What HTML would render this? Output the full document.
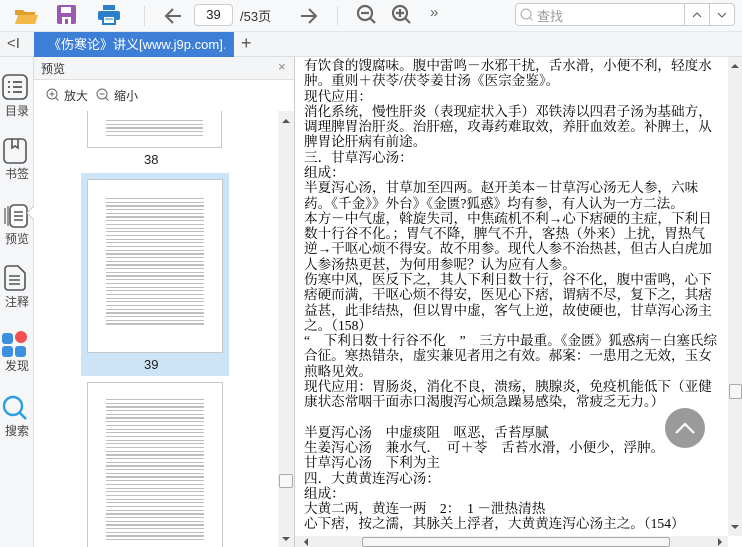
<!DOCTYPE html>
<html><head><meta charset="utf-8"><style>
*{margin:0;padding:0;box-sizing:border-box}
body{width:742px;height:547px;overflow:hidden;background:#fff;font-family:"Liberation Sans","Noto Sans CJK SC",sans-serif;position:relative}
.abs{position:absolute}
#tb{left:0;top:0;width:742px;height:32px;background:#f6f8fa;border-bottom:1px solid #e4e7ea}
#tabs{left:0;top:32px;width:742px;height:25px;background:#f3f5f7;border-bottom:1px solid #dcdfe3}
#tab{left:34px;top:32px;width:200px;height:25px;background:#3d7fd6;color:#fff;font-size:13px;line-height:25px;padding-left:14px}
#side{left:0;top:57px;width:34px;height:490px;background:#f5f6f8;border-right:1px solid #dcdfe3}
.si{position:absolute;left:0;width:34px;text-align:center;font-size:12px;color:#444}
#prev{left:34px;top:57px;width:261px;height:490px;background:#fff;border-right:1px solid #ccc;overflow:hidden}
#main{left:296px;top:57px;width:432px;height:479px;background:#fff;overflow:hidden}
.txt{position:absolute;left:8px;top:1px;font-family:"Liberation Serif","Noto Serif CJK SC",serif;font-size:13.6px;line-height:15.28px;color:#000;white-space:pre}
.pg{position:absolute;background:#fff;border:1px solid #c8c8c8;overflow:hidden}
.lines{position:absolute;left:18px;right:18px}
.lines div{height:1.2px;background:#888;margin-bottom:2.5px;opacity:.55}
</style></head><body>
<div id="tb" class="abs">
 <svg class="abs" style="left:14px;top:6px" width="24" height="20"><path d="M1 4h8l2 2h10v3H1z" fill="#e0a030"/><path d="M1 18L4 9h20l-3 9z" fill="#f2b84a"/></svg>
 <svg class="abs" style="left:57px;top:5px" width="20" height="20"><rect x="0" y="0" width="19" height="19" rx="2" fill="#9b59b6"/><rect x="4" y="2" width="10" height="6" fill="#fff"/><rect x="5" y="12" width="9" height="7" fill="#fff"/><rect x="8" y="14" width="3" height="5" fill="#9b59b6"/></svg>
 <svg class="abs" style="left:98px;top:5px" width="22" height="20"><rect x="5" y="0" width="12" height="5" fill="#2a7fc8"/><rect x="0" y="6" width="22" height="9" rx="2" fill="#2a7fc8"/><rect x="5" y="11" width="12" height="8" fill="#fff" stroke="#2a7fc8" stroke-width="2"/><line x1="7" y1="14" x2="15" y2="14" stroke="#2a7fc8"/></svg>
 <div class="abs" style="left:144px;top:6px;width:1px;height:20px;background:#ddd"></div>
 <svg class="abs" style="left:163px;top:6px" width="20" height="20"><path d="M18 10H3M10 3L3 10l7 7" stroke="#666" stroke-width="2" fill="none"/></svg>
 <div class="abs" style="left:194px;top:4px;width:39px;height:22px;border:1px solid #ccc;border-radius:4px;background:#fff;font-size:13px;text-align:center;line-height:20px;color:#222">39</div>
 <div class="abs" style="left:240px;top:6px;font-size:13px;color:#333">/53页</div>
 <svg class="abs" style="left:299px;top:6px" width="20" height="20"><path d="M2 10h15M10 3l7 7-7 7" stroke="#666" stroke-width="2" fill="none"/></svg>
 <div class="abs" style="left:337px;top:6px;width:1px;height:20px;background:#ddd"></div>
 <svg class="abs" style="left:356px;top:4px" width="22" height="22"><circle cx="9" cy="9" r="7" stroke="#666" stroke-width="2.2" fill="none"/><path d="M5 9h8M14 14l5 5" stroke="#666" stroke-width="2.2"/></svg>
 <svg class="abs" style="left:391px;top:4px" width="22" height="22"><circle cx="9" cy="9" r="7" stroke="#666" stroke-width="2.2" fill="none"/><path d="M5 9h8M9 5v8M14 14l5 5" stroke="#666" stroke-width="2.2"/></svg>
 <div class="abs" style="left:430px;top:4px;font-size:15px;color:#666">»</div>
 <div class="abs" style="left:515px;top:3px;width:220px;height:23px;border:1px solid #c8ccd0;border-radius:4px;background:#fff"></div>
 <svg class="abs" style="left:520px;top:8px" width="14" height="14"><circle cx="6" cy="6" r="5" stroke="#aaa" fill="none"/><path d="M9.5 9.5l3 3" stroke="#aaa"/></svg>
 <div class="abs" style="left:537px;top:6px;font-size:13px;color:#999">查找</div>
 <div class="abs" style="left:684px;top:3px;width:1px;height:23px;background:#ccc"></div>
 <div class="abs" style="left:709px;top:3px;width:1px;height:23px;background:#ccc"></div>
 <svg class="abs" style="left:692px;top:11px" width="10" height="8"><path d="M1 6l4-4 4 4" stroke="#555" fill="none"/></svg>
 <svg class="abs" style="left:717px;top:11px" width="10" height="8"><path d="M1 2l4 4 4-4" stroke="#555" fill="none"/></svg>
</div>
<div id="tabs" class="abs"></div>
<div class="abs" style="left:7px;top:35px;font-size:15px;color:#555">&lt;I</div>
<div id="tab" class="abs">《伤寒论》讲义[www.j9p.com]<span style="opacity:.6">.</span> ×</div>
<div class="abs" style="left:241px;top:33px;font-size:18px;color:#555">+</div>
<div id="side" class="abs">
 <svg class="abs" style="left:2px;top:17px" width="26" height="26"><rect x="1" y="1" width="24" height="24" rx="5" stroke="#555" stroke-width="1.6" fill="none"/><path d="M6 8h2M11 8h9M6 13h2M11 13h9M6 18h2M11 18h9" stroke="#555" stroke-width="1.8"/></svg>
 <div class="si" style="top:45px">目录</div>
 <svg class="abs" style="left:3px;top:81px" width="24" height="26"><rect x="1" y="1" width="22" height="24" rx="4" stroke="#555" stroke-width="1.6" fill="none"/><path d="M9 1v9l3-2 3 2V1" stroke="#555" stroke-width="1.6" fill="none"/></svg>
 <div class="si" style="top:108px">书签</div>
 <svg class="abs" style="left:2px;top:145px" width="26" height="26"><path d="M3 22V6M6 24V4" stroke="#666" stroke-width="1.3"/><rect x="8" y="3" width="17" height="22" rx="4" stroke="#555" stroke-width="1.6" fill="#fff"/><path d="M12 10h9M12 14h9M12 18h9" stroke="#555" stroke-width="1.6"/></svg>
 <div class="si" style="top:173px">预览</div>
 <svg class="abs" style="left:4px;top:208px" width="22" height="26"><path d="M1 4a3 3 0 013-3h10l7 7v14a3 3 0 01-3 3H4a3 3 0 01-3-3z" stroke="#555" stroke-width="1.6" fill="none"/><path d="M5 11h11M5 15h11M5 19h11" stroke="#555" stroke-width="1.6"/></svg>
 <div class="si" style="top:236px">注释</div>
 <div class="abs" style="left:2px;top:276px;width:11px;height:11px;background:#3d8fe0;border-radius:3px"></div>
 <div class="abs" style="left:15px;top:274px;width:12px;height:12px;background:#f0504f;border-radius:50%"></div>
 <div class="abs" style="left:2px;top:289px;width:11px;height:11px;background:#3d8fe0;border-radius:3px"></div>
 <div class="abs" style="left:15px;top:289px;width:11px;height:11px;background:#3d8fe0;border-radius:3px"></div>
 <div class="si" style="top:300px">发现</div>
 <svg class="abs" style="left:2px;top:338px" width="26" height="26"><circle cx="11" cy="11" r="9" stroke="#2a9ee0" stroke-width="2.4" fill="none"/><path d="M18 18l6 6" stroke="#2a9ee0" stroke-width="2.6"/></svg>
 <div class="si" style="top:365px">搜索</div>
</div>
<svg class="abs" style="left:27px;top:205px" width="8" height="16"><path d="M8 0L0 8l8 8" fill="#fff" stroke="#ccc"/></svg>
<div id="prev" class="abs">
 <div class="abs" style="left:0;top:0;width:260px;height:23px;background:#f3f5f7;border-bottom:1px solid #e0e0e0"></div>
 <div class="abs" style="left:7px;top:3px;font-size:12px;color:#333">预览</div>
 <div class="abs" style="left:244px;top:2px;font-size:13px;color:#888">×</div>
 <svg class="abs" style="left:12px;top:31px" width="14" height="14"><circle cx="6" cy="6" r="5" stroke="#666" fill="none"/><path d="M3.5 6h5M6 3.5v5M9.5 9.5l3 3" stroke="#666"/></svg>
 <div class="abs" style="left:30px;top:30px;font-size:12px;color:#333">放大</div>
 <svg class="abs" style="left:62px;top:31px" width="14" height="14"><circle cx="6" cy="6" r="5" stroke="#666" fill="none"/><path d="M3.5 6h5M9.5 9.5l3 3" stroke="#666"/></svg>
 <div class="abs" style="left:80px;top:30px;font-size:12px;color:#333">缩小</div>
 <div class="abs" style="left:0;top:54px;width:244px;height:436px;overflow:hidden">
  <div class="pg" style="left:53px;top:-10px;width:135px;height:47px"><div class="lines" style="top:18px"><div></div><div></div><div></div><div></div><div></div></div></div>
  <div class="abs" style="left:110px;top:41px;font-size:13px;color:#222">38</div>
  <div class="abs" style="left:47px;top:62px;width:148px;height:203px;background:#cde4f7"></div>
  <div class="pg" style="left:53px;top:68px;width:136px;height:174px"><div class="lines" style="top:18px"><div></div><div></div><div></div><div></div><div></div><div></div><div></div><div></div><div></div><div></div><div></div><div></div><div></div><div></div><div></div><div></div><div></div><div></div><div></div><div></div><div></div><div></div><div></div><div></div><div></div><div></div><div></div><div></div><div></div><div></div><div></div><div></div><div></div><div></div><div></div></div></div>
  <div class="abs" style="left:110px;top:246px;font-size:13px;color:#222">39</div>
  <div class="pg" style="left:53px;top:271px;width:136px;height:166px"><div class="lines" style="top:16px"><div></div><div></div><div></div><div></div><div></div><div></div><div></div><div></div><div></div><div></div><div></div><div></div><div></div><div></div><div></div><div></div><div></div><div></div><div></div><div></div><div></div><div></div><div></div><div></div><div></div><div></div><div></div><div></div><div></div><div></div><div></div><div></div><div></div><div></div><div></div><div></div><div></div><div></div><div></div></div></div>
 </div>
 <div class="abs" style="left:244px;top:54px;width:16px;height:436px;background:#f0f0f0"></div>
 <svg class="abs" style="left:248px;top:61px" width="8" height="5"><path d="M0 5l4-4 4 4z" fill="#555"/></svg>
 <div class="abs" style="left:245px;top:417px;width:14px;height:14px;background:#f8f8f8;border:1px solid #aaa;border-radius:2px"></div>
 <svg class="abs" style="left:248px;top:480px" width="8" height="5"><path d="M0 0l4 4 4-4z" fill="#555"/></svg>
</div>
<div id="main" class="abs"><div class="txt">有饮食的馊腐味。腹中雷鸣－水邪干扰，舌水滑，小便不利，轻度水
肿。重则＋茯苓/茯苓姜甘汤《医宗金鉴》。
现代应用：
消化系统，慢性肝炎（表现症状入手）邓铁涛以四君子汤为基础方，
调理脾胃治肝炎。治肝癌，攻毒药难取效，养肝血效差。补脾土，从
脾胃论肝病有前途。
三．甘草泻心汤：
组成：
半夏泻心汤，甘草加至四两。赵开美本－甘草泻心汤无人参，六味
药。《千金》》外台》《金匮?狐惑》均有参，有人认为一方二法。
本方－中气虚，斡旋失司，中焦疏机不利→心下痞硬的主症，下利日
数十行谷不化。；胃气不降，脾气不升，客热（外来）上扰，胃热气
逆→干呕心烦不得安。故不用参。现代人参不治热甚，但古人白虎加
人参汤热更甚，为何用参呢？认为应有人参。
伤寒中风，医反下之，其人下利日数十行，谷不化，腹中雷鸣，心下
痞硬而满，干呕心烦不得安，医见心下痞，谓病不尽，复下之，其痞
益甚，此非结热，但以胃中虚，客气上逆，故使硬也，甘草泻心汤主
之。（158）
“　下利日数十行谷不化　”　三方中最重。《金匮》狐惑病－白塞氏综
合征。寒热错杂，虚实兼见者用之有效。郝案：一患用之无效，玉女
煎略见效。
现代应用：胃肠炎，消化不良，溃疡，胰腺炎，免疫机能低下（亚健
康状态常咽干面赤口渴腹泻心烦急躁易感染，常疲乏无力。）

半夏泻心汤　中虚痰阻　呕恶，舌苔厚腻
生姜泻心汤　兼水气．　可＋苓　舌苔水滑，小便少，浮肿。
甘草泻心汤　下利为主
四．大黄黄连泻心汤：
组成：
大黄二两，黄连一两　2：　1 －泄热清热
心下痞，按之濡，其脉关上浮者，大黄黄连泻心汤主之。（154）</div></div>
<div class="abs" style="left:728px;top:57px;width:14px;height:479px;background:#f0f0f0"></div>
<svg class="abs" style="left:731px;top:63px" width="8" height="5"><path d="M0 5l4-4 4 4z" fill="#555"/></svg>
<div class="abs" style="left:729px;top:384px;width:13px;height:15px;background:#f6f6f6;border:1px solid #aaa;border-radius:2px"></div>
<svg class="abs" style="left:731px;top:525px" width="8" height="5"><path d="M0 0l4 4 4-4z" fill="#555"/></svg>
<div class="abs" style="left:295px;top:536px;width:433px;height:11px;background:#f0f0f0"></div>
<svg class="abs" style="left:303px;top:538px" width="5" height="8"><path d="M5 0L1 4l4 4z" fill="#555"/></svg>
<div class="abs" style="left:362px;top:537px;width:308px;height:10px;background:#f6f6f6;border:1px solid #aaa;border-radius:2px"></div>
<svg class="abs" style="left:718px;top:538px" width="5" height="8"><path d="M0 0l4 4-4 4z" fill="#555"/></svg>
<div class="abs" style="left:665px;top:408px;width:40px;height:40px;border-radius:50%;background:#9a9a9a"></div>
<svg class="abs" style="left:673px;top:418px" width="24" height="20"><path d="M3 15l9-9 9 9" stroke="#fff" stroke-width="2.2" fill="none"/></svg>
</body></html>
